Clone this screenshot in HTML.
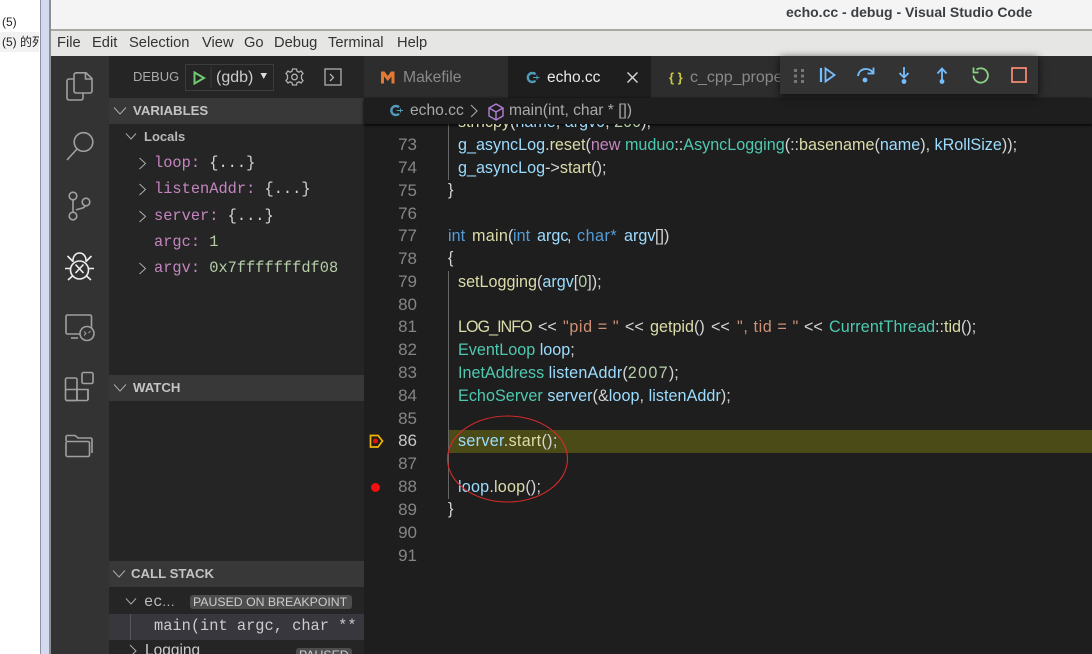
<!DOCTYPE html>
<html><head><meta charset="utf-8"><style>
html,body{margin:0;padding:0;background:#fff}
#r{position:relative;width:1092px;height:654px;overflow:hidden;font-family:"Liberation Sans","Noto Sans CJK SC",sans-serif;background:#fff}
.a{position:absolute;white-space:pre}
.b{position:absolute}
.m{font-family:"Liberation Mono",monospace;font-size:15.35px;color:#d4d4d4;line-height:26px;white-space:pre;position:absolute}
.v{color:#c586c0}.n{color:#b5cea8}
.h{position:absolute;left:109px;width:255px;height:26px;background:#383838;color:#c4c4c4;font-size:13.2px;font-weight:bold;line-height:26px}
.h span{position:absolute;left:24px}
.l{position:absolute;left:417px;color:#858585;font-size:17px;line-height:23px;width:0;white-space:pre;text-align:right;direction:rtl}
.c{position:absolute;left:458px;font-size:16.15px;line-height:23px;color:#d4d4d4;white-space:pre}
.k{color:#569cd6}.f{color:#dcdcaa}.w{color:#9cdcfe}.t{color:#4ec9b0}.s{color:#ce9178}.q{color:#c586c0}.u{color:#b5cea8}
.menu{position:absolute;top:31px;height:25px;line-height:25px;font-size:14.7px;color:#333}
</style></head><body><div id="r">
<div class="a" style="left:2px;top:15px;font-size:12px;color:#222">(5)</div>
<div class="b" style="left:0;top:32px;width:39px;height:20px;background:#f2f2f2;overflow:hidden"><div class="a" style="left:2px;top:1px;font-size:12px;color:#222">(5) 的死</div></div>
<div class="b" style="left:40px;top:0;width:1px;height:654px;background:#8e93a3"></div>
<div class="b" style="left:41px;top:0;width:8px;height:654px;background:#d3d9ee"></div>
<div class="b" style="left:49px;top:0;width:2px;height:654px;background:#8f8f8f"></div>
<div class="b" style="left:51px;top:0;width:1041px;height:30px;background:#f4f4f4"></div>
<div class="b" style="left:51px;top:29px;width:1041px;height:2px;background:#a9a9a4"></div>
<div class="b" style="left:51px;top:31px;width:1041px;height:25px;background:#e6e6e4"></div>
<div class="a" style="left:786px;top:3px;font-size:14px;font-weight:bold;color:#3a3f44;line-height:18px">echo.cc - debug - Visual Studio Code</div>
<div class="menu" style="left:57px">File</div><div class="menu" style="left:92px">Edit</div><div class="menu" style="left:129px">Selection</div><div class="menu" style="left:202px">View</div><div class="menu" style="left:244px">Go</div><div class="menu" style="left:274px">Debug</div><div class="menu" style="left:328px">Terminal</div><div class="menu" style="left:397px">Help</div>
<div class="b" style="left:51px;top:56px;width:58px;height:598px;background:#333"></div>
<div class="b" style="left:109px;top:56px;width:255px;height:598px;background:#252526"></div>
<div class="b" style="left:364px;top:56px;width:728px;height:598px;background:#1e1e1e"></div>
<div class="a" style="left:133px;top:68px;font-size:13px;color:#aaa;line-height:18px">DEBUG</div>
<div class="b" style="left:185px;top:64px;width:87px;height:25px;border:1px solid #3c3c3c"></div>
<div class="a" style="left:216px;top:67px;font-size:16px;color:#ccc;line-height:22px">(gdb)</div>
<div class="h" style="top:98px"><span>VARIABLES</span></div>
<div class="a" style="left:144px;top:128px;font-size:13px;font-weight:bold;color:#b9b9b9;line-height:18px">Locals</div>
<div class="m" style="left:154px;top:150px"><span class="v">loop:</span> {...}</div>
<div class="m" style="left:154px;top:176px"><span class="v">listenAddr:</span> {...}</div>
<div class="m" style="left:154px;top:203px"><span class="v">server:</span> {...}</div>
<div class="m" style="left:154px;top:229px"><span class="v">argc:</span> <span class="n">1</span></div>
<div class="m" style="left:154px;top:255px"><span class="v">argv:</span> <span class="n">0x7fffffffdf08</span></div>
<div class="h" style="top:375px"><span>WATCH</span></div>
<div class="h" style="top:561px"><span style="left:22px">CALL STACK</span></div>
<div class="m" style="left:144px;top:589px;color:#bbb">ec<span style="font-family:'Liberation Sans',sans-serif;font-size:13px;letter-spacing:.6px">...</span></div>
<div class="b" style="left:190px;top:595px;width:162px;height:14px;background:#4d4d4d;border-radius:3px"></div>
<div class="a" style="left:193px;top:594px;font-size:12.3px;color:#ccc;line-height:16px">PAUSED ON BREAKPOINT</div>
<div class="b" style="left:109px;top:614px;width:255px;height:26px;background:#37373d"></div>
<div class="b" style="left:130px;top:614px;width:1px;height:26px;background:#585858"></div>
<div class="m" style="left:154px;top:613px;color:#ccc">main(int argc, char **</div>
<div class="a" style="left:145px;top:642px;font-size:15.5px;color:#ccc;line-height:18px">Logging</div>
<div class="b" style="left:296px;top:648px;width:56px;height:14px;background:#4d4d4d;border-radius:3px"></div>
<div class="a" style="left:299px;top:647px;font-size:12.3px;color:#ccc;line-height:16px">PAUSED</div>

<div class="b" style="left:364px;top:56px;width:144px;height:42px;background:#2d2d2d"></div>
<div class="b" style="left:651px;top:56px;width:441px;height:42px;background:#2d2d2d"></div>
<div class="a" style="left:403px;top:68px;font-size:15.7px;color:#8a8a8a;line-height:19px">Makefile</div>
<div class="a" style="left:547px;top:68px;font-size:15.5px;color:#e8e8e8;line-height:19px">echo.cc</div>
<div class="a" style="left:669px;top:68px;font-size:13px;font-weight:bold;color:#cbcb41;line-height:19px">{ }</div>
<div class="a" style="left:690px;top:68px;font-size:16px;color:#8a8a8a;line-height:19px">c_cpp_properties.json</div>

<div class="b" style="left:364px;top:124px;width:728px;height:530px;overflow:hidden">
<div class="b" style="left:84px;top:306px;width:644px;height:23px;background:#4b4b18"></div>
<div class="b" style="left:84px;top:0;width:1px;height:56px;background:#666"></div>
<div class="b" style="left:84px;top:147px;width:1px;height:228px;background:#666"></div>
</div>
<div class="b" style="left:364px;top:98px;width:728px;height:26px;background:#1e1e1e;box-shadow:0 1px 3px #000"></div>
<div class="a" style="left:410px;top:101px;font-size:15.6px;color:#a9a9a9;line-height:20px">echo.cc</div>
<div class="a" style="left:509px;top:101px;font-size:15.6px;color:#a9a9a9;line-height:20px">main(int, char * [])</div>

<div style="position:absolute;left:0;top:124px;width:1092px;height:530px;overflow:hidden">
<div class="c" style="top:-13px;"><span class="f">strncpy</span>(<span class="w">name</span>, <span class="w">argv0</span>, <span class="u">200</span>);</div>
<div class="c" style="top:10px"><span class="w">g_asyncLog</span>.<span class="f">reset</span>(<span class="q">new</span> <span class="t">muduo</span>::<span class="t">AsyncLogging</span>(::<span class="f">basename</span>(<span class="w">name</span>), <span class="w">kRollSize</span>));</div>
<div class="c" style="top:33px"><span class="w">g_asyncLog</span>-&gt;<span class="f">start</span>();</div>
<div class="c" style="top:55px;left:448px">}</div>
<div class="c k" style="top:101px;left:448px">int</div><div class="c f" style="top:101px;left:472px;letter-spacing:.3px">main</div><div class="c" style="top:101px;left:508px">(</div><div class="c k" style="top:101px;left:513px">int</div><div class="c w" style="top:101px;left:537px">argc</div><div class="c" style="top:101px;left:567px">,</div><div class="c k" style="top:101px;left:577px;letter-spacing:.5px">char*</div><div class="c w" style="top:101px;left:624px">argv</div><div class="c" style="top:101px;left:655px">[])</div>
<div class="c" style="top:123px;left:448px">{</div>
<div class="c" style="top:147px"><span class="f">setLogging</span>(<span class="w">argv</span>[<span class="u">0</span>]);</div>
<div class="c f" style="top:192px;left:458px;letter-spacing:-1px">LOG_INFO</div><div class="c" style="top:192px;left:538px">&lt;&lt;</div><div class="c s" style="top:192px;left:563px;letter-spacing:.6px">"pid = "</div><div class="c" style="top:192px;left:625px">&lt;&lt;</div><div class="c" style="top:192px;left:650px"><span class="f">getpid</span>()</div><div class="c" style="top:192px;left:711px">&lt;&lt;</div><div class="c s" style="top:192px;left:737px;letter-spacing:.6px">", tid = "</div><div class="c" style="top:192px;left:804px">&lt;&lt;</div><div class="c t" style="top:192px;left:829px;letter-spacing:.1px">CurrentThread</div><div class="c" style="top:192px;left:935px">::<span class="f">tid</span>();</div>
<div class="c" style="top:215px"><span class="t">EventLoop</span> <span class="w">loop</span>;</div>
<div class="c" style="top:238px"><span class="t">InetAddress</span> <span class="w" style="letter-spacing:.2px">listenAddr</span>(<span class="u" style="letter-spacing:1.3px">2007</span>);</div>
<div class="c" style="top:261px;letter-spacing:.05px"><span class="t">EchoServer</span> <span class="w">server</span>(&amp;<span class="w">loop</span>, <span class="w">listenAddr</span>);</div>
<div class="c" style="top:306px;letter-spacing:.3px"><span class="w">server</span>.<span class="f">start</span>();</div>
<div class="c" style="top:352px;letter-spacing:.2px"><span class="w">loop</span>.<span class="f">loop</span>();</div>
<div class="c" style="top:374px;left:448px">}</div>
<div class="l" style="top:9px">73</div><div class="l" style="top:32px">74</div><div class="l" style="top:55px">75</div><div class="l" style="top:78px">76</div><div class="l" style="top:100px">77</div><div class="l" style="top:123px">78</div><div class="l" style="top:146px">79</div><div class="l" style="top:169px">80</div><div class="l" style="top:191px">81</div><div class="l" style="top:214px">82</div><div class="l" style="top:237px">83</div><div class="l" style="top:260px">84</div><div class="l" style="top:283px">85</div><div class="l" style="top:305px;color:#c6c6c6">86</div><div class="l" style="top:328px">87</div><div class="l" style="top:351px">88</div><div class="l" style="top:374px">89</div><div class="l" style="top:397px">90</div><div class="l" style="top:420px">91</div>
</div>

<svg class="b" style="left:0;top:0" width="1092" height="654" viewBox="0 0 1092 654" fill="none">
<g stroke="#a0a0a0" stroke-width="1.6">
<path d="M74 79H69a2 2 0 0 0-2 2V98a2 2 0 0 0 2 2H81a2 2 0 0 0 2-2V93"/>
<path d="M76 72.800H86L92 78.500V91a2 2 0 0 1-2 2H76a2 2 0 0 1-2-2V75a2 2 0 0 1 2-2Z"/><path d="M85.500 73V79H92"/>
<circle cx="83.500" cy="142" r="9.300"/><path d="M77 149L67 160"/>
<circle cx="73" cy="196" r="3.800"/><circle cx="86" cy="202" r="3.800"/><circle cx="73" cy="216" r="3.800"/>
<path d="M73 200V212M76 210C80 208 84 209 85 206"/>
<rect x="66" y="315" width="25.500" height="19" rx="1.500"/><path d="M71 338H78"/>
<circle cx="87" cy="333.500" r="7" fill="#333"/>
<path d="M84 331.500L86 333.500 84 335.500M90.500 331L88.500 333" stroke-width="1"/>
<rect x="65.500" y="378" width="11.500" height="22.500" rx="1.500"/><path d="M65.500 389.500H88V399a1.500 1.500 0 0 1-1.500 1.500H66"/><path d="M77 389.500V400.500M77 389.500V388"/><path d="M88 389.500V400"/>
<rect x="82" y="372.500" width="11" height="11" rx="1.500"/>
<path d="M66 443V455a1.500 1.500 0 0 0 1.500 1.500H88a1.500 1.500 0 0 0 1.500-1.500V443a1.500 1.500 0 0 0-1.500-1.500H67.500a1.500 1.500 0 0 0-1.500 1.500ZM66 441V437a1.500 1.500 0 0 1 1.500-1.500H75L78 438H90.500a1.500 1.500 0 0 1 1.500 1.500V453"/>
</g>
<g stroke="#eeeeee" stroke-width="1.600">
<ellipse cx="79.500" cy="270" rx="9" ry="9"/>
<path d="M73 262C72 250 87 250 86 262"/>
<path d="M75.500 264.500L83.500 273M83.500 264.500L75.500 273"/>
<path d="M65 268.500H70M89 268.500H94M67.500 256L72.500 261M91.500 256L86.500 261M68 280L72.500 276M91 280L86.500 276"/>
</g>
<path d="M194.500 72.500L204 78 194.500 83.500Z" stroke="#6fc96f" stroke-width="2"/>
<path d="M211 67V88" stroke="#3c3c3c"/>
<path d="M260.500 73H267L263.700 79Z" fill="#ddd"/>
<g stroke="#b0b0b0" stroke-width="1.300">
<circle cx="294.500" cy="77" r="2.800"/>
<path d="M292.500 69H296.500L297 71.200L299 72.200L301 71L303 73.500L301.500 75.200V78.800L303 80.500L301 83L299 81.800L297 82.800L296.500 85H292.500L292 82.800L290 81.800L288 83L286 80.500L287.500 78.800V75.200L286 73.500L288 71L290 72.200L292 71.200Z"/>
<rect x="325" y="69" width="16" height="16"/><path d="M330 74L333.500 77.500 330 81"/>
</g>
<g stroke="#aaaaaa" stroke-width="1">
<path d="M114 107.500L120 114 126 107.500M114 384.500L120 391 126 384.500M113 570.500L119 577 125 570.500M126 133.500L131 139 136 133.500M126 598.500L131 604 136 598.500M139.500 158L145.500 163.500 139.500 169M139.500 184L145.500 189.500 139.500 195M139.500 211L145.500 216.500 139.500 222M139.500 263L145.500 268.500 139.500 274M130 645L136 651 130 657"/>
</g>
<path d="M381 83.500V71.500H384.500L387.800 76 391 71.500H394.500V83.500H391.500V76.500L387.800 81 384 76.500V83.500Z" fill="#e37933"/>
<g stroke="#519aba" stroke-width="2.400" fill="none"><path d="M535.500 74.300A4.500 4.500 0 1 0 535.500 80.700"/><path d="M399 107.300A4.500 4.500 0 1 0 399 113.700"/></g>
<path d="M533 77.500H539.500M537 75.500V79.500M396.500 110.500H403M400.500 108.500V112.500" stroke="#519aba" stroke-width="1.100"/>
<path d="M627.500 72.500L637.500 82.500M637.500 72.500L627.500 82.500" stroke="#d8d8d8" stroke-width="1.400"/>
<path d="M471 105L477 111 471 117" stroke="#a0a0a0" stroke-width="1.200"/>
<path d="M496 104L503 108V116L496 120 489 116V108ZM489 108L496 112 503 108M496 112V120" stroke="#b180d7" stroke-width="1.400"/>
<path d="M370.500 435.500H378L382.500 441 378 447H370.500Z" stroke="#f5b400" stroke-width="1.700" fill="#1e1e1e"/>
<circle cx="375.500" cy="441" r="2.500" fill="#e51400"/>
<circle cx="375.500" cy="487.500" r="4.500" fill="#f01010"/>
<ellipse cx="507.500" cy="459" rx="60" ry="43" stroke="#d42a2a" stroke-width="1.100"/>
</svg>

<div class="b" style="left:780px;top:56px;width:258px;height:38px;background:#333;box-shadow:0 2px 8px rgba(0,0,0,.75)"></div>
<svg class="b" style="left:780px;top:56px" width="258" height="38" viewBox="0 0 258 38" fill="none">
<g fill="#777"><rect x="14" y="13" width="3" height="3"/><rect x="21" y="13" width="3" height="3"/><rect x="14" y="18.500" width="3" height="3"/><rect x="21" y="18.500" width="3" height="3"/><rect x="14" y="24" width="3" height="3"/><rect x="21" y="24" width="3" height="3"/></g>
<g stroke="#75beff" stroke-width="1.800">
<path d="M41 12V26" stroke-width="2.200"/><path d="M45.500 12.500L54.500 19 45.500 25.500Z"/>
<path d="M78 20C79 11.500 90 11 93 17"/><path d="M93.500 11.500V17.500H87.500"/>
<path d="M124 11V21M119.500 17L124 21.500 128.500 17"/>
<path d="M162 25V13M157.500 17.500L162 12.500 166.500 17.500"/>
</g>
<g fill="#75beff"><circle cx="85" cy="24" r="2.400"/><circle cx="124" cy="25.500" r="2.400"/><circle cx="162" cy="25.500" r="2.400"/></g>
<path d="M196.500 13.600A7.200 7.200 0 1 1 193.500 19.500M193.500 11.500V16.500H198.500" stroke="#89d185" stroke-width="1.800"/>
<rect x="232" y="12" width="14" height="14" stroke="#f48771" stroke-width="1.800"/>
</svg>
</div></body></html>
